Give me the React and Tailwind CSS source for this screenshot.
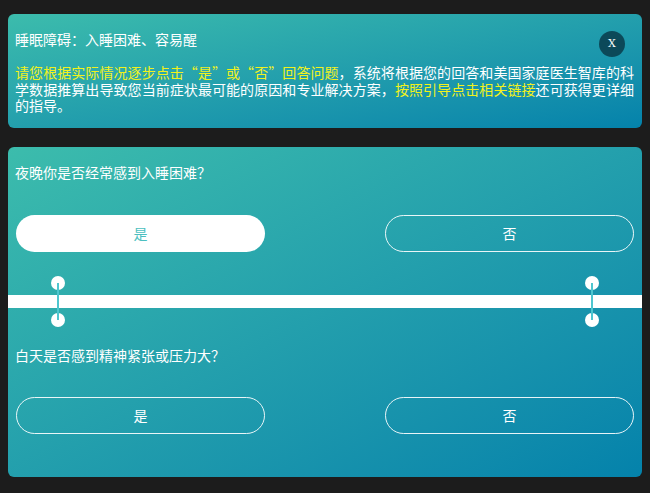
export default function App() {
  const font = { fontFamily: '"Noto Sans CJK SC", "Noto Sans", sans-serif' };

  const Connector = ({ className }) => (
    <div className={`absolute top-[-19px] w-[14px] h-[51px] ${className}`}>
      <div className="absolute left-0 top-0 w-[14px] h-[14px] rounded-full bg-white" />
      <div className="absolute left-0 bottom-0 w-[14px] h-[14px] rounded-full bg-white" />
      <div className="absolute left-[6px] top-[7px] w-[2px] h-[37px] bg-[#4ec6cf]" />
    </div>
  );

  const Question = ({ text, yesActive, textMt, buttonMt }) => (
    <div>
      <p className={`px-[7px] text-[14px] leading-[20px] text-white ${textMt}`}>{text}</p>
      <div className={`flex justify-between px-[8px] ${buttonMt}`}>
        {yesActive ? (
          <button className="w-[249px] h-[37px] rounded-full bg-white text-[14px] text-[#4cbfc0]">是</button>
        ) : (
          <button className="w-[249px] h-[37px] rounded-full border border-white/90 text-[14px] text-white">是</button>
        )}
        <button className="w-[249px] h-[37px] rounded-full border border-white/90 text-[14px] text-white">否</button>
      </div>
    </div>
  );

  const yellow = 'text-[#f2f21c]';

  return (
    <div lang="zh-CN" className="min-h-[493px] bg-[#1c1c1c] px-[8px] pt-[14px] pb-[16px]" style={font}>
      {/* intro card */}
      <div className="relative h-[114px] rounded-[6px] bg-linear-to-br from-[#3cbcac] to-[#0482ab] px-[7px] pt-[15px]">
        <h1 className="text-[14px] leading-[20px] text-white">睡眠障碍：入睡困难、容易醒</h1>
        <button className="absolute right-[17px] top-[17px] flex h-[26px] w-[26px] items-center justify-center rounded-full bg-[#0c4959] text-[11px] text-white" style={{ fontFamily: '"DejaVu Serif", serif' }}>
          X
        </button>
        <div className="mt-[15px] w-[619px] text-[14px] leading-[16.5px] text-white">
          <div className="text-justify [text-align-last:justify]">
            <span className={yellow}>请您根据实际情况逐步点击“是”或“否”回答问题</span>，系统将根据您的回答和美国家庭医生智库的科
          </div>
          <div className="text-justify [text-align-last:justify]">
            学数据推算出导致您当前症状最可能的原因和专业解决方案，<span className={yellow}>按照引导点击相关链接</span>还可获得更详细
          </div>
          <div>的指导。</div>
        </div>
      </div>

      {/* questions card */}
      <div className="mt-[19px] h-[330px] rounded-[6px] bg-linear-to-br from-[#3cbcac] to-[#0482ab]">
        <Question text="夜晚你是否经常感到入睡困难？" yesActive textMt="pt-[15px]" buttonMt="mt-[33px]" />
        <div className="relative mt-[43px] h-[13px] bg-white">
          <Connector className="left-[43px]" />
          <Connector className="left-[577px]" />
        </div>
        <Question text="白天是否感到精神紧张或压力大？" textMt="pt-[37px]" buttonMt="mt-[32px]" />
      </div>
    </div>
  );
}
